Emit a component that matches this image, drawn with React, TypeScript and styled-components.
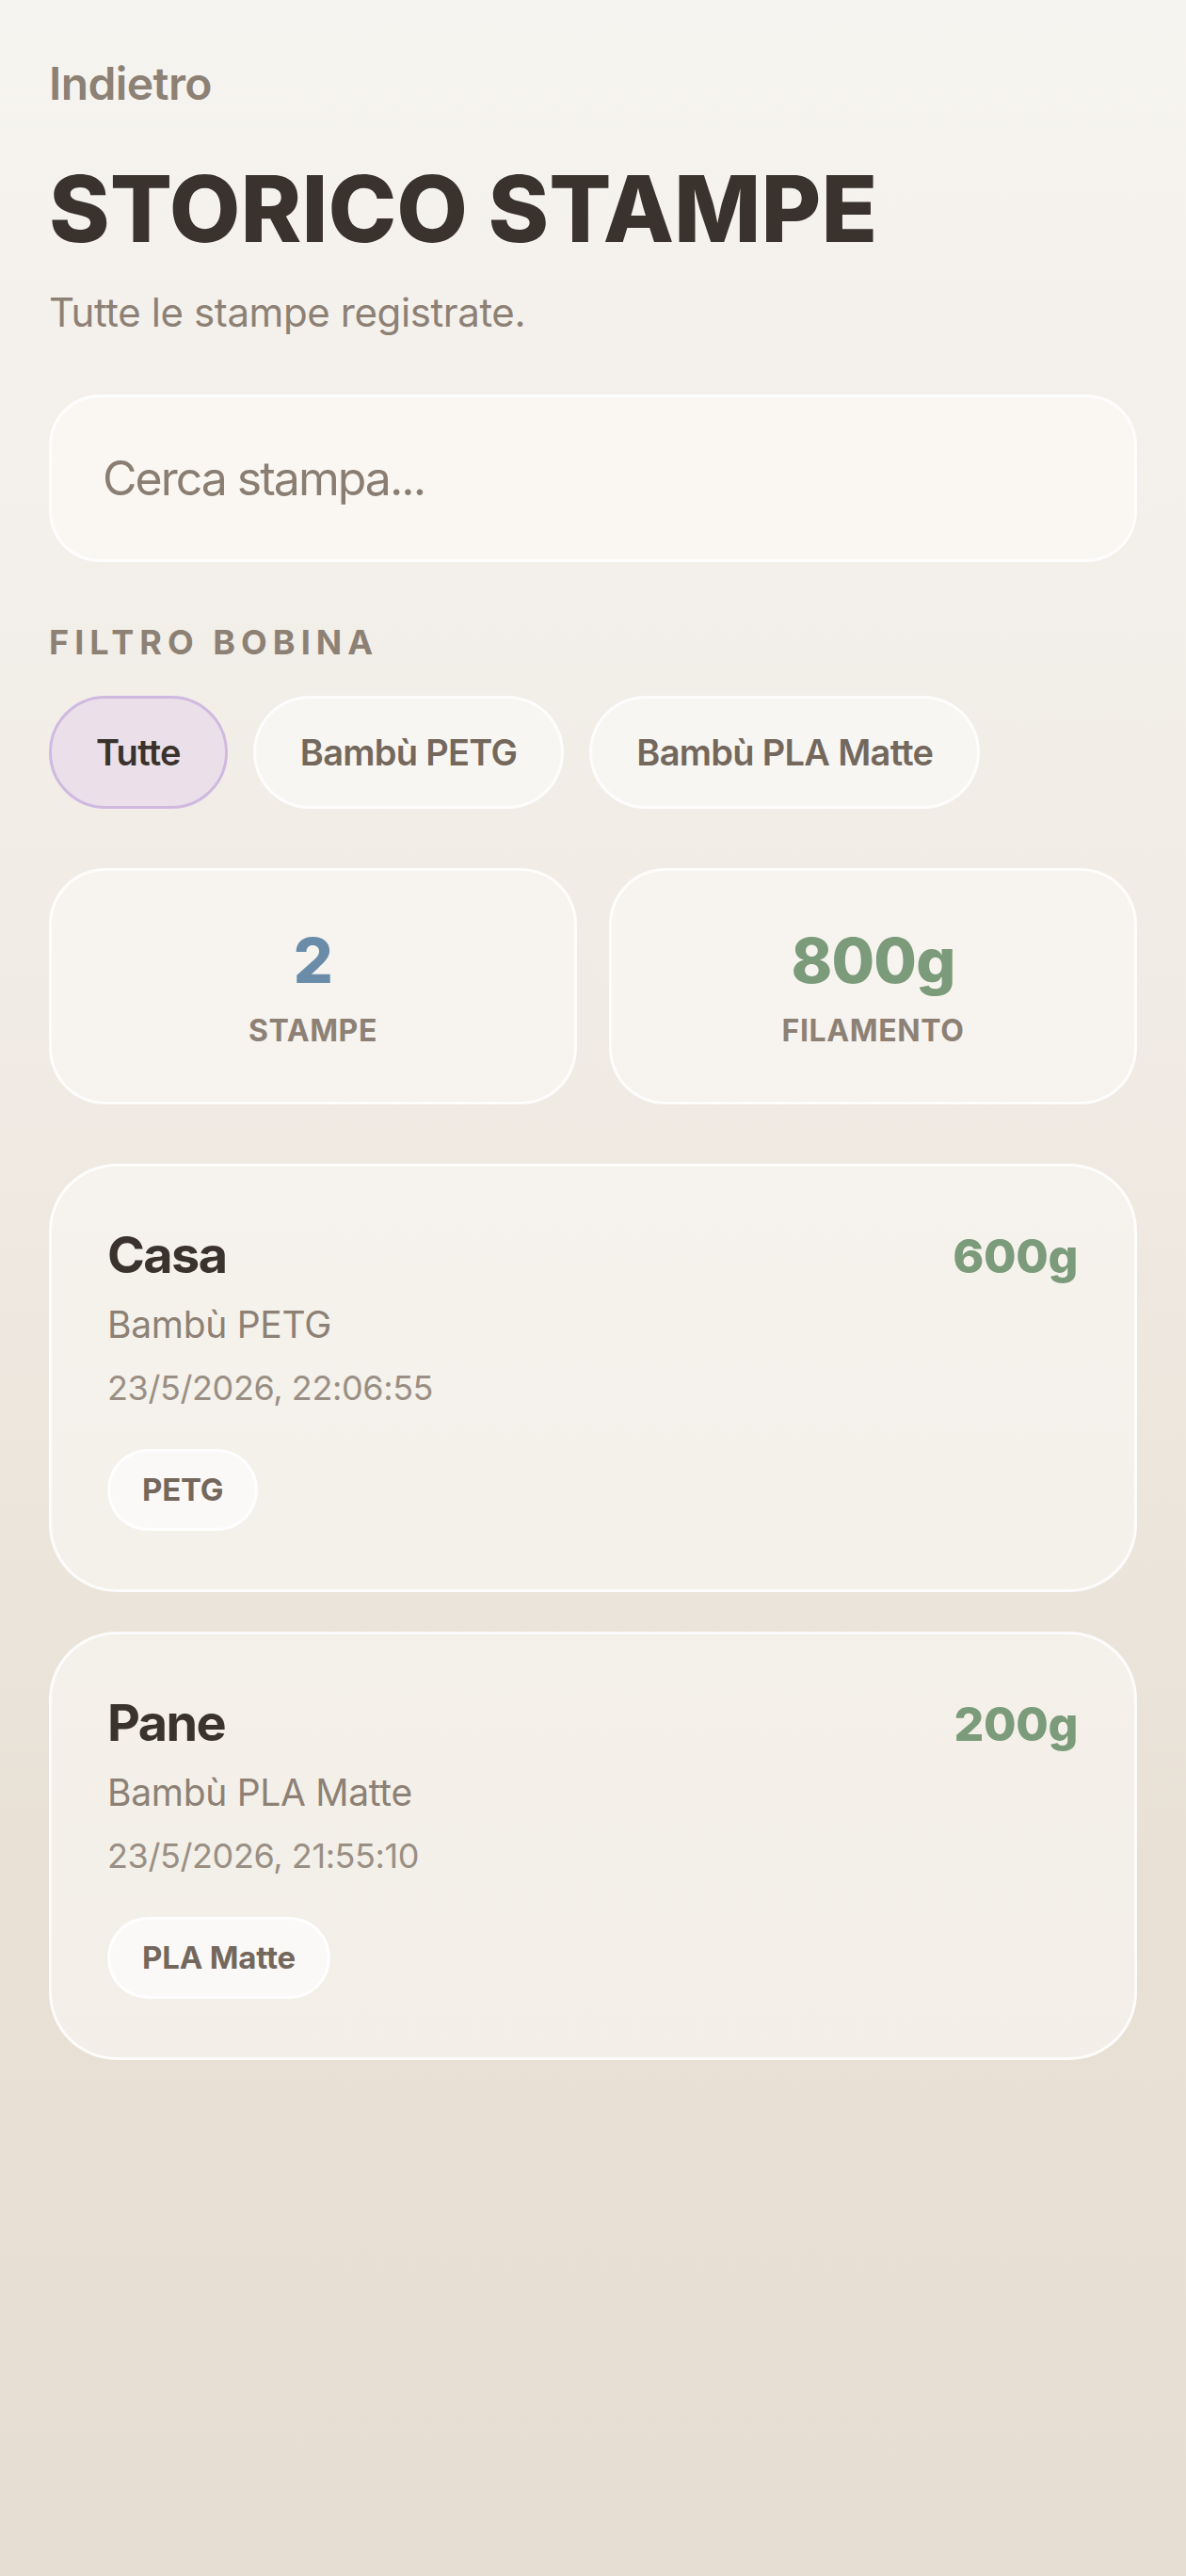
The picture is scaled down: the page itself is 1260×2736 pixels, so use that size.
import React, { useState } from 'react';
import styled, { createGlobalStyle } from 'styled-components';

const GlobalStyle = createGlobalStyle`
  html, body {
    margin: 0;
    padding: 0;
  }

  body {
    font-family: Inter, "Noto Sans", sans-serif;
    background: #e7dfd4;
  }

  * {
    box-sizing: border-box;
  }
`;

const Colors = {
  ink: '#3a322c',
  muted: '#8d8175',
  soft: '#9a8f84',
  chipText: '#74685d',
  blue: '#6a8ca9',
  green: '#7b9b7a',
};

const Page = styled.main`
  min-height: 100vh;
  padding: 60px 52px 120px;
  background: linear-gradient(180deg, #f6f4f0 0%, #f0ebe4 40%, #e9e1d6 72%, #e7ded3 100%);
  display: flex;
  flex-direction: column;
`;

const BackLink = styled.a`
  align-self: flex-start;
  color: ${Colors.muted};
  font-size: 48px;
  font-weight: 600;
  line-height: 58px;
  letter-spacing: -0.6px;
  text-decoration: none;
  cursor: pointer;
`;

const Title = styled.h1`
  color: ${Colors.ink};
  font-size: 98px;
  font-weight: 800;
  line-height: 108px;
  margin: 50px 0 0;
`;

const Subtitle = styled.p`
  color: ${Colors.muted};
  font-size: 42px;
  line-height: 52px;
  letter-spacing: -0.4px;
  margin: 30px 0 0;
`;

const SearchInput = styled.input`
  margin-top: 61px;
  height: 178px;
  width: 100%;
  padding: 0 54px;
  border: 3px solid rgba(255, 255, 255, 0.8);
  border-radius: 54px;
  background: rgba(250, 248, 245, 0.85);
  color: ${Colors.ink};
  font-family: Inter, "Noto Sans", sans-serif;
  font-size: 50px;
  letter-spacing: -2px;
  outline: none;

  &::placeholder {
    color: #8a7e72;
  }
`;

const SectionLabel = styled.h2`
  color: ${Colors.muted};
  font-size: 36px;
  font-weight: 700;
  line-height: 44px;
  letter-spacing: 6px;
  margin: 63px 0 0;
`;

const ChipRow = styled.div`
  display: flex;
  gap: 27px;
  margin-top: 35px;
`;

const Chip = styled.button<{ $active?: boolean }>`
  height: 120px;
  padding: 0 47px;
  border-radius: 60px;
  border: 3px solid ${(p) => (p.$active ? '#cfb9e0' : 'rgba(255, 255, 255, 0.85)')};
  background: ${(p) => (p.$active ? '#ebe0e9' : 'rgba(249, 247, 243, 0.85)')};
  color: ${(p) => (p.$active ? Colors.ink : Colors.chipText)};
  font-family: Inter, "Noto Sans", sans-serif;
  font-size: 38px;
  font-weight: 600;
  letter-spacing: -0.7px;
  cursor: pointer;
`;

const StatsGrid = styled.div`
  display: grid;
  grid-template-columns: 1fr 1fr;
  gap: 34px;
  margin-top: 63px;
`;

const StatCard = styled.div`
  display: flex;
  flex-direction: column;
  align-items: center;
  padding: 55px 20px;
  border: 3px solid rgba(255, 255, 255, 0.8);
  border-radius: 60px;
  background: rgba(249, 247, 243, 0.7);
`;

const StatValue = styled.span<{ $color: string }>`
  color: ${(p) => p.$color};
  font-size: 66px;
  font-weight: 800;
  line-height: 80px;
  letter-spacing: -0.8px;
`;

const StatLabel = styled.span`
  margin-top: 15px;
  color: ${Colors.muted};
  font-size: 32px;
  font-weight: 700;
  line-height: 40px;
  letter-spacing: 0.6px;
`;

const PrintList = styled.div`
  display: flex;
  flex-direction: column;
  gap: 42px;
  margin-top: 63px;
`;

const PrintCard = styled.article`
  display: flex;
  flex-direction: column;
  align-items: flex-start;
  padding: 62px 60px 62px 59px;
  border: 3px solid rgba(255, 255, 255, 0.8);
  border-radius: 72px;
  background: rgba(249, 247, 243, 0.65);
`;

const CardHeader = styled.div`
  display: flex;
  justify-content: space-between;
  align-items: baseline;
  width: 100%;
`;

const PrintName = styled.h3`
  margin: 0;
  color: ${Colors.ink};
  font-size: 54px;
  font-weight: 700;
  line-height: 64px;
  letter-spacing: -1.6px;
`;

const PrintWeight = styled.span`
  color: ${Colors.green};
  font-size: 50px;
  font-weight: 800;
  line-height: 64px;
  letter-spacing: -0.4px;
`;

const SpoolName = styled.p`
  margin: 17px 0 0;
  color: ${Colors.muted};
  font-size: 39px;
  line-height: 48px;
  letter-spacing: -0.3px;
`;

const PrintDate = styled.p`
  margin: 21px 0 0;
  color: ${Colors.soft};
  font-size: 36px;
  line-height: 44px;
  letter-spacing: -0.4px;
`;

const MaterialBadge = styled.span`
  margin-top: 43px;
  padding: 20px 34px;
  border: 3px solid rgba(255, 255, 255, 0.85);
  border-radius: 44px;
  background: rgba(252, 250, 248, 0.9);
  color: ${Colors.chipText};
  font-size: 33px;
  font-weight: 700;
  line-height: 41px;
  letter-spacing: -0.2px;
`;

const spools = ['Tutte', 'Bambù PETG', 'Bambù PLA Matte'];

const prints = [
  { name: 'Casa', spool: 'Bambù PETG', date: '23/5/2026, 22:06:55', grams: 600, material: 'PETG' },
  { name: 'Pane', spool: 'Bambù PLA Matte', date: '23/5/2026, 21:55:10', grams: 200, material: 'PLA Matte' },
];

export default function App() {
  const [filter, setFilter] = useState('Tutte');
  const [query, setQuery] = useState('');

  const total = prints.reduce((sum, p) => sum + p.grams, 0);

  return (
    <>
      <GlobalStyle />
      <Page>
        <BackLink>Indietro</BackLink>
        <Title>STORICO STAMPE</Title>
        <Subtitle>Tutte le stampe registrate.</Subtitle>

        <SearchInput
          placeholder="Cerca stampa..."
          value={query}
          onChange={(e) => setQuery(e.target.value)}
        />

        <SectionLabel>FILTRO BOBINA</SectionLabel>
        <ChipRow>
          {spools.map((s) => (
            <Chip key={s} $active={filter === s} onClick={() => setFilter(s)}>
              {s}
            </Chip>
          ))}
        </ChipRow>

        <StatsGrid>
          <StatCard>
            <StatValue $color={Colors.blue}>{prints.length}</StatValue>
            <StatLabel>STAMPE</StatLabel>
          </StatCard>
          <StatCard>
            <StatValue $color={Colors.green}>{total}g</StatValue>
            <StatLabel>FILAMENTO</StatLabel>
          </StatCard>
        </StatsGrid>

        <PrintList>
          {prints.map((p) => (
            <PrintCard key={p.name}>
              <CardHeader>
                <PrintName>{p.name}</PrintName>
                <PrintWeight>{p.grams}g</PrintWeight>
              </CardHeader>
              <SpoolName>{p.spool}</SpoolName>
              <PrintDate>{p.date}</PrintDate>
              <MaterialBadge>{p.material}</MaterialBadge>
            </PrintCard>
          ))}
        </PrintList>
      </Page>
    </>
  );
}
